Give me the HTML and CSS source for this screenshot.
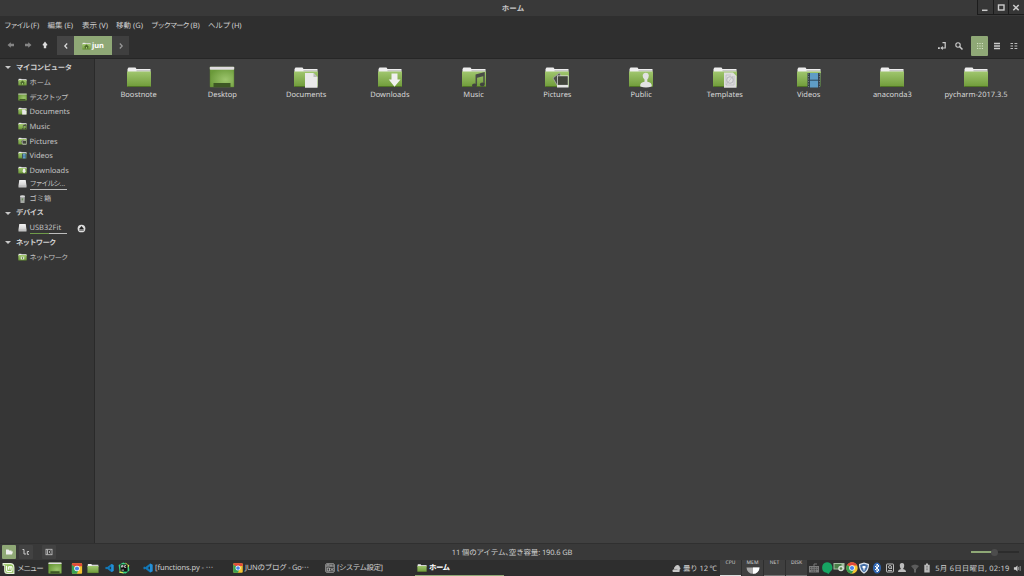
FILE: index.html
```html
<!DOCTYPE html>
<html lang="ja">
<head>
    <meta charset="UTF-8">
    <title>ホーム</title>
    <link rel="stylesheet" href="styles.css">
</head>
<body>

<svg class="defs" width="0" height="0">
    <defs>
        <linearGradient id="green" x1="0" y1="0" x2="0" y2="1">
            <stop offset="0" stop-color="#a0c66e"/>
            <stop offset="1" stop-color="#6f9b39"/>
        </linearGradient>
        <radialGradient id="glow" cx="0.65" cy="0.6" r="0.7">
            <stop offset="0" stop-color="#9dc56d"/>
            <stop offset="1" stop-color="#6b9a3a"/>
        </radialGradient>
        <linearGradient id="silver" x1="0" y1="0" x2="0" y2="1">
            <stop offset="0" stop-color="#f4f4f4"/>
            <stop offset="1" stop-color="#c4c4c4"/>
        </linearGradient>
        <symbol id="folder" viewBox="0 0 26 22">
            <path d="M1.5 3 L2.5 1.5 H9.5 L10.5 3 H24.5 V8 H1.5Z" fill="#eee"/>
            <path d="M10.5 4 H24 V5.5 H10.5Z" fill="#c9c9c9"/>
            <path d="M1 5.5 H25 V19.5 Q25 21 24 21 H2 Q1 21 1 19.5Z" fill="url(#green)"/>
            <path d="M1.5 20.5 H24.5" stroke="#4f7326" stroke-width="1"/>
        </symbol>
        <symbol id="desktop" viewBox="0 0 26 22">
            <rect x="0.8" y="0.8" width="24.4" height="20.5" rx="0.7" fill="#5d8432"/>
            <rect x="1.3" y="3" width="23.4" height="17.8" fill="url(#glow)"/>
            <rect x="0.8" y="0.8" width="24.4" height="3" rx="0.7" fill="#e0dce0"/>
            <rect x="4.5" y="17" width="17" height="4" fill="#3d5724"/>
        </symbol>
        <symbol id="doc" viewBox="0 0 26 22">
            <path d="M12 7 H20.5 L24.5 11 V21.7 H12Z" fill="#e9e9e9"/>
            <path d="M20.5 7 V11 H24.5Z" fill="#bcbcbc"/>
        </symbol>
        <symbol id="down" viewBox="0 0 26 22">
            <path d="M14.5 7.5 H20.5 V13.5 H23.5 L17.5 20.8 L11.8 13.5 H14.5Z" fill="#f0f0f0"/>
        </symbol>
        <symbol id="note" viewBox="0 0 26 22">
            <path d="M15.3 19 V9 L23 7 V18" fill="none" stroke="#4a4c48" stroke-width="1.5"/>
            <path d="M15.3 9 L23 7 V10 L15.3 12Z" fill="#4a4c48"/>
            <ellipse cx="13.5" cy="19.5" rx="2.5" ry="2" fill="#41433f"/>
            <ellipse cx="21.3" cy="18.5" rx="2.4" ry="2" fill="#41433f"/>
        </symbol>
        <symbol id="photo" viewBox="0 0 26 22">
            <path d="M9 12 L15.5 7 L20 17 L13 19Z" fill="#4b4d46" stroke="#a8a8a8" stroke-width="0.8"/>
            <rect x="13" y="9.5" width="11.5" height="12" fill="#e5e5e5"/>
            <rect x="13.7" y="10.2" width="10.1" height="8.7" fill="#41443b"/>
        </symbol>
        <symbol id="person" viewBox="0 0 26 22">
            <path d="M12.3 20.5 Q11.5 16.5 16.5 15.8 V13.5 Q14.3 11 14.8 8.8 Q15.5 6.7 17.8 6.7 Q20.3 6.7 20.8 9 Q21 11.5 19.3 13.5 V15.8 Q24.3 16.5 23.7 20.5 Q18 22.5 12.3 20.5Z" fill="#e2e2e2"/>
        </symbol>
        <symbol id="template" viewBox="0 0 26 22">
            <path d="M12 6.5 H21 L24.5 10 V21.7 H12Z" fill="#dedede"/>
            <circle cx="18" cy="14" r="3.3" fill="none" stroke="#b4b4ba" stroke-width="1"/>
            <path d="M14 19 L21 10 M14 19 H22 V10 M14 9 V19 M14 9 H19" fill="none" stroke="#bdbdc2" stroke-width="0.8"/>
        </symbol>
        <symbol id="film" viewBox="0 0 26 22">
            <rect x="11.5" y="7" width="13" height="14.5" fill="#34414c"/>
            <rect x="14" y="7" width="8" height="14.5" fill="#5f9cc6"/>
            <path d="M14 14.2 H22" stroke="#263d50" stroke-width="0.9"/>
            <path d="M12.6 7.5 V21.5 M23.4 7.5 V21.5" stroke="#8b9298" stroke-width="0.8" stroke-dasharray="1.1 1.4"/>
        </symbol>
        <symbol id="house" viewBox="0 0 26 22">
            <path d="M13 7 L20 13 H18 V18 H8 V13 H6Z" fill="#4d6b2c"/>
            <path d="M11.5 18 V14 H14.5 V18Z" fill="#a5c77b"/>
        </symbol>
        <symbol id="drive" viewBox="0 0 22 20">
            <path d="M3 0 H19 L21 14 V18 Q21 19 20 19 H2 Q1 19 1 18 V14Z" fill="url(#silver)"/>
            <path d="M1.5 15 H20.5" stroke="#9a9a9a"/>
        </symbol>
        <symbol id="trash" viewBox="0 0 20 20">
            <path d="M4 3 H16 L15 20 H5Z" fill="#a4a8a4"/>
            <ellipse cx="10" cy="3" rx="6.5" ry="2.5" fill="#d8d8d8"/>
            <path d="M8 9 L12 8 L11 14 L8 13Z" fill="#6d8c5a"/>
        </symbol>
        <symbol id="chrome" viewBox="0 0 20 20">
            <circle cx="10" cy="10" r="9.5" fill="#f8c631"/>
            <path d="M10 10 L1.8 5.2 A9.5 9.5 0 0 1 18.8 6 H10Z" fill="#e0483a"/>
            <path d="M10 10 L1.8 5.2 A9.5 9.5 0 0 0 9.5 19.5 L13.5 12Z" fill="#38a052"/>
            <circle cx="10" cy="10" r="4.6" fill="#fff"/>
            <circle cx="10" cy="10" r="3.5" fill="#4b84e8"/>
        </symbol>
        <symbol id="chrome-tile" viewBox="0 0 20 20">
            <rect x="0.5" y="0.5" width="19" height="19" rx="2" fill="#f3c432"/>
            <path d="M10 10 L0.5 3 V2 Q0.5 0.5 2 0.5 H18 Q19.5 0.5 19.5 2 V6 H10Z" fill="#df4a3b"/>
            <path d="M10 10 L0.5 3 V18 Q0.5 19.5 2 19.5 H9.5 L13.5 12Z" fill="#38a052"/>
            <circle cx="10" cy="10" r="5" fill="#fff"/>
            <circle cx="10" cy="10" r="3.7" fill="#4b84e8"/>
        </symbol>
        <symbol id="vscode" viewBox="0 0 20 20">
            <path d="M14 1 L19 3.5 V16.5 L14 19 L4.5 11.5 L2.5 13 L1 12 V8 L2.5 7 L4.5 8.5Z" fill="#1278b8"/>
            <path d="M14 6.5 L9.5 10 L14 13.5Z" fill="#24333d"/>
            <path d="M14 1 L19 3.5 V16.5 L14 19Z" fill="#2590d8"/>
        </symbol>
        <symbol id="mint" viewBox="0 0 24 24">
            <path d="M1 2 H15 Q23 2 23 10 V22 H10 Q4 22 4 16 V7 H1Z" fill="#e6f1da"/>
            <path d="M3 4 H15 Q21 4 21 10 V20 H10 Q6 20 6 16 V5.5 H3Z" fill="#92c15c"/>
            <path d="M8.5 7 V15 Q8.5 17.5 11 17.5 H16 Q18.5 17.5 18.5 15 V10.5 Q18.5 8.5 16.5 8.5 Q15 8.5 15 10.5 V14.5 M15 10.5 Q15 8.5 13.3 8.5 Q11.8 8.5 11.8 10.5 V14.5" fill="none" stroke="#fff" stroke-width="2"/>
        </symbol>
    </defs>
</svg>

<div class="window">
    <header class="titlebar">
        <span class="title">ホーム</span>
        <div class="controls">
            <span><svg viewBox="0 0 14 14"><path d="M4 10.3 H9.5" stroke="#ccc" stroke-width="1.5"/></svg></span>
            <span><svg viewBox="0 0 14 14"><rect x="4.5" y="5" width="5.5" height="5" fill="none" stroke="#ccc" stroke-width="1.4"/></svg></span>
            <span><svg viewBox="0 0 14 14"><path d="M4.3 5 L9.7 10.3 M9.7 5 L4.3 10.3" stroke="#ccc" stroke-width="1.5"/></svg></span>
        </div>
    </header>

    <nav class="menubar">
        <span class="m1"><b>ファイル</b> (F)</span>
        <span class="m2">編集 (E)</span>
        <span class="m3">表示 (V)</span>
        <span class="m4">移動 (G)</span>
        <span class="m5"><b>ブックマーク</b> (B)</span>
        <span class="m6">ヘルプ (H)</span>
    </nav>

    <div class="toolbar">
        <div class="nav-icons">
            <svg viewBox="0 0 10 10"><path d="M1.5 5 L4.8 2.2 V3.8 H8 V6.2 H4.8 V7.8Z" fill="#858585"/></svg>
            <svg viewBox="0 0 10 10"><path d="M8.5 5 L5.2 2.2 V3.8 H2 V6.2 H5.2 V7.8Z" fill="#858585"/></svg>
            <svg viewBox="0 0 10 10"><path d="M5 1.5 L7.6 5 L6.2 5.8 V8.3 H3.8 V5.8 L2.4 5Z" fill="#ddd"/></svg>
        </div>
        <div class="pathbar">
            <span class="step"><svg viewBox="0 0 10 10"><path d="M6.2 2.5 L3.8 5 L6.2 7.5" fill="none" stroke="#ddd" stroke-width="1.2"/></svg></span>
            <span class="crumb"><svg viewBox="0 0 26 22"><use href="#folder"/><use href="#house"/></svg>jun</span>
            <span class="step"><svg viewBox="0 0 10 10"><path d="M3.8 2.5 L6.2 5 L3.8 7.5" fill="none" stroke="#999" stroke-width="1.2"/></svg></span>
        </div>
        <div class="tools">
            <svg class="tool" viewBox="0 0 10 10"><path d="M5.5 1.7 H8.2 V7 H5" fill="none" stroke="#ccc" stroke-width="1.2"/><path d="M5.8 5 V8.9 L3.3 7Z M1 6.3 H2.8 V8 H1Z" fill="#ccc"/></svg>
            <svg class="tool" viewBox="0 0 10 10"><circle cx="4" cy="4" r="2.2" fill="none" stroke="#ccc" stroke-width="1.1"/><path d="M5.5 5.5 L8.5 8.5" stroke="#ccc" stroke-width="1.5"/></svg>
            <span class="view active"><svg viewBox="0 0 10 10"><path d="M2 2.5 H8 M2 5 H8 M2 7.5 H8" stroke="#d5e2c6" stroke-width="1.2" stroke-dasharray="1.2 1.2"/></svg></span>
            <span class="view"><svg viewBox="0 0 10 10"><path d="M2 2.5 H8 M2 5 H8 M2 7.5 H8" stroke="#ccc" stroke-width="1.3"/></svg></span>
            <span class="view"><svg viewBox="0 0 10 10"><path d="M1.5 2.5 H4 M1.5 5 H4 M1.5 7.5 H4 M5.5 2.5 H8.3 M5.5 5 H8.3 M5.5 7.5 H8.3" stroke="#bbb" stroke-width="1.2"/></svg></span>
        </div>
    </div>

    <main class="body">
        <aside class="sidebar">
            <div class="group g1"><i></i><span>マイコンピュータ</span></div>
            <div class="place"><svg viewBox="0 0 26 22"><use href="#folder"/><use href="#house"/></svg><span class="kana">ホーム</span></div>
            <div class="place"><svg viewBox="0 0 26 22"><use href="#desktop"/></svg><span class="kana k-desk">デスクトップ</span></div>
            <div class="place"><svg viewBox="0 0 26 22"><use href="#folder"/><use href="#doc"/></svg><span>Documents</span></div>
            <div class="place"><svg viewBox="0 0 26 22"><use href="#folder"/><use href="#note"/></svg><span>Music</span></div>
            <div class="place"><svg viewBox="0 0 26 22"><use href="#folder"/><use href="#photo"/></svg><span>Pictures</span></div>
            <div class="place"><svg viewBox="0 0 26 22"><use href="#folder"/><use href="#film"/></svg><span>Videos</span></div>
            <div class="place"><svg viewBox="0 0 26 22"><use href="#folder"/><use href="#down"/></svg><span>Downloads</span></div>
            <div class="place"><svg viewBox="0 0 22 20"><use href="#drive"/></svg><span class="kana disk fs"><b>ファイルシ</b>...</span></div>
            <div class="place bin"><svg viewBox="0 0 20 20"><use href="#trash"/></svg><span class="kana">ゴミ箱</span></div>
            <div class="group g2"><i></i><span>デバイス</span></div>
            <div class="place"><svg viewBox="0 0 22 20"><use href="#drive"/></svg><span class="disk usb">USB32Fit</span>
                <svg class="eject" viewBox="0 0 10 10"><circle cx="5" cy="5" r="4.3" fill="#ddd"/><path d="M5 2.3 L7.7 5.5 H2.3Z M2.5 6.2 H7.5 V7.3 H2.5Z" fill="#222"/></svg>
            </div>
            <div class="group g3"><i></i><span>ネットワーク</span></div>
            <div class="place"><svg viewBox="0 0 26 22"><use href="#folder"/><path d="M8 10 H18 V18 H8Z" fill="#dfe8d6"/><path d="M11 13 H15 M13 13 V17" stroke="#4d6b2c" stroke-width="2"/></svg><span class="kana k-net">ネットワーク</span></div>
        </aside>

        <section class="files">
            <div class="file"><svg viewBox="0 0 26 22"><use href="#folder"/></svg><span>Boostnote</span></div>
            <div class="file"><svg viewBox="0 0 26 22"><use href="#desktop"/></svg><span>Desktop</span></div>
            <div class="file"><svg viewBox="0 0 26 22"><use href="#folder"/><use href="#doc"/></svg><span>Documents</span></div>
            <div class="file"><svg viewBox="0 0 26 22"><use href="#folder"/><use href="#down"/></svg><span>Downloads</span></div>
            <div class="file"><svg viewBox="0 0 26 22"><use href="#folder"/><use href="#note"/></svg><span>Music</span></div>
            <div class="file"><svg viewBox="0 0 26 22"><use href="#folder"/><use href="#photo"/></svg><span>Pictures</span></div>
            <div class="file"><svg viewBox="0 0 26 22"><use href="#folder"/><use href="#person"/></svg><span>Public</span></div>
            <div class="file"><svg viewBox="0 0 26 22"><use href="#folder"/><use href="#template"/></svg><span>Templates</span></div>
            <div class="file"><svg viewBox="0 0 26 22"><use href="#folder"/><use href="#film"/></svg><span>Videos</span></div>
            <div class="file"><svg viewBox="0 0 26 22"><use href="#folder"/></svg><span>anaconda3</span></div>
            <div class="file"><svg viewBox="0 0 26 22"><use href="#folder"/></svg><span>pycharm-2017.3.5</span></div>
        </section>
    </main>

    <footer class="statusbar">
        <div class="side-buttons">
            <span class="sb active"><svg viewBox="0 0 10 10"><path d="M2 2.5 H4.5 L5.2 3.5 H7.5 V4.5 H9 L8 7.5 H2Z" fill="#eee"/></svg></span>
            <span class="sb"><svg viewBox="0 0 10 10"><path d="M1.5 2.5 H3 V7 H5 M8 4.5 H6.3 V7.3 H8" fill="none" stroke="#ccc" stroke-width="1"/></svg></span>
            <span class="sb last"><svg viewBox="0 0 10 10"><rect x="2" y="2.3" width="6" height="5.4" fill="none" stroke="#bbb" stroke-width="0.9"/><path d="M3.5 2.5 V7.5 M6.5 3.7 L5 5 L6.5 6.3" fill="none" stroke="#bbb" stroke-width="0.9"/></svg></span>
        </div>
        <span class="status">11 個のアイテム<b>、</b>空き容量: 190.6 GB</span>
        <div class="zoom"><i></i></div>
    </footer>
</div>

<div class="panel">
    <div class="launchers">
        <svg class="mint" viewBox="0 0 24 24"><use href="#mint"/></svg>
        <span class="menu">メニュー</span>
        <svg class="l-desk" viewBox="0 0 26 22"><use href="#desktop"/></svg>
        <svg class="l-chrome" viewBox="0 0 20 20"><use href="#chrome-tile"/></svg>
        <svg class="l-folder" viewBox="0 0 26 22"><use href="#folder"/></svg>
        <svg class="l-code" viewBox="0 0 20 20"><use href="#vscode"/></svg>
        <svg class="l-charm" viewBox="0 0 20 20"><path d="M1 5 L9 1 L18 6 L19 14 L13 19 L3 18Z" fill="#38d585"/><path d="M12 1 L19 6 L16 10Z M4 13 L10 19 L2 18Z" fill="#d9e956"/><rect x="4" y="4" width="12" height="12" fill="#111"/><path d="M6 9 V6 H8.5 V8 H6 M13.5 6 H11 V9 H13.5 M6 13.5 H10" fill="none" stroke="#fff" stroke-width="1.2"/></svg>
    </div>
    <div class="tasks">
        <div class="task t1"><svg viewBox="0 0 20 20"><use href="#vscode"/></svg><span>[functions.py - ⋯</span></div>
        <div class="task t2"><svg viewBox="0 0 20 20"><use href="#chrome-tile"/></svg><span>JUNのブログ - Go⋯</span></div>
        <div class="task t3"><svg viewBox="0 0 20 20"><rect x="1.5" y="1.5" width="17" height="17" rx="2" fill="#3d3d3d" stroke="#c0c0c0" stroke-width="1.5"/><path d="M2 6 H18 M4 3.7 H9 M12 3 V7 M4.5 10 H9 V16 H4.5Z M11 10 L17 16 M17 10 L11 16" fill="none" stroke="#c0c0c0" stroke-width="1.5"/></svg><span>[システム設定]</span></div>
        <div class="task t4 current"><svg viewBox="0 0 26 22"><use href="#folder"/></svg><span>ホーム</span></div>
    </div>
    <div class="tray">
        <svg class="cloud" viewBox="0 0 10 10"><path d="M3.2 3 Q4 0.8 6.5 1 Q9 1.5 8.5 3.7 Q10.3 5 8.7 6.3 H8 Q9.3 7.3 8 9 H1.2 Q-0.3 7.5 1.2 6 H3 Q1.3 4.7 3.2 3Z" fill="#c8c8c8"/><path d="M3 6 H6" stroke="#666" stroke-width="0.6"/></svg>
        <span class="weather">曇り 12 ℃</span>
        <div class="meters">
            <div class="meter cpu">CPU</div>
            <div class="meter mem">MEM<svg viewBox="0 0 14 7"><path d="M0.5 0.5 H13.5 A6.5 6.3 0 0 1 0.5 0.5Z" fill="#aaa"/><path d="M7 0.5 H13.5 A6.5 6.3 0 0 1 7 6.8Z" fill="#fff"/></svg></div>
            <div class="meter">NET</div>
            <div class="meter">DISK</div>
        </div>
        <div class="tray-icons">
            <svg viewBox="0 0 12 12"><path d="M6 4 V2 H9" fill="none" stroke="#777"/><rect x="1" y="4" width="10" height="6.5" fill="#7c7c7c"/><path d="M2 5.7 H10 M2 7.4 H10 M3.5 9.1 H8.5" stroke="#333" stroke-width="0.8" stroke-dasharray="1 0.7"/></svg>
            <svg viewBox="0 0 12 12"><path d="M6 0.3 A5.3 5.3 0 0 1 9 10 L7.5 12 L5.5 10.8 A5.3 5.3 0 0 1 6 0.3Z" fill="#16a562"/></svg>
            <svg viewBox="0 0 12 12"><rect x="0.5" y="1" width="11" height="6.5" fill="#a4c0a2"/><rect x="1.5" y="2" width="7" height="4.5" fill="#4a7e48"/><circle cx="8" cy="6.5" r="2.8" fill="#d7dfd5"/><circle cx="8" cy="6.5" r="1.3" fill="#58834d"/></svg>
            <svg viewBox="0 0 20 20"><use href="#chrome"/></svg>
            <svg viewBox="0 0 12 12"><path d="M6 0.5 L11 2 Q11.3 9 6 11.7 Q0.7 9 1 2Z" fill="#dfe6ef"/><path d="M6 1.8 L9.8 3 Q9.8 8 6 10.3 Q2.2 8 2.2 3Z" fill="#456fa6"/><path d="M4.5 4 H7.5 V6 L6.5 6.5 V8.5 H5.5 V6.5 L4.5 6Z" fill="#fff"/></svg>
            <svg viewBox="0 0 12 12"><ellipse cx="6" cy="6" rx="4" ry="5.5" fill="#2f66b3"/><path d="M4 4 L8 8 L6 10 V2 L8 4 L4 8" fill="none" stroke="#fff" stroke-width="1"/></svg>
            <svg viewBox="0 0 12 12"><rect x="2.5" y="2" width="7" height="8" rx="0.5" fill="none" stroke="#bbb"/><circle cx="6" cy="5" r="1.5" fill="none" stroke="#bbb"/><path d="M4 8.5 H8 M7 6 L8 7" stroke="#bbb"/></svg>
            <svg viewBox="0 0 12 12"><path d="M6 1 Q8.5 1 8.2 4 Q8 6 7 7 Q10 7.5 10 10 H2 Q2 7.5 5 7 Q4 6 3.8 4 Q3.5 1 6 1Z" fill="#bdbdbd"/></svg>
            <svg viewBox="0 0 12 12"><path d="M2 4 Q6 1 10 4 L7 7.5 H5Z" fill="#5c5c5c"/><path d="M6 7 V10.5" stroke="#777" stroke-width="1.5"/></svg>
            <svg viewBox="0 0 12 12"><path d="M5 1.5 H7 V2.7 H8.7 V10.5 H3.3 V2.7 H5Z" fill="#bbb"/><path d="M5 4.3 H7 M5 6 H7 M5 7.7 H7" stroke="#777" stroke-width="0.8"/></svg>
        </div>
        <span class="clock">5月 6日日曜日, 02:19</span>
        <svg class="sound" viewBox="0 0 10 10"><path d="M1 3.7 H2.8 L5 1.7 V8.3 L2.8 6.3 H1Z" fill="#ccc"/><path d="M6.3 3.3 V6.7 M8 2.3 V7.7" stroke="#aaa" stroke-width="0.9"/></svg>
    </div>
</div>

</body>
</html>
```
FILE: styles.css
```css
* {
    box-sizing: border-box;
}
body {
    margin: 0;
    width: 1024px;
    height: 576px;
    overflow: hidden;
    display: flex;
    flex-direction: column;
    background: #2f2f2f;
    color: #cfcfcf;
    font-family: "Noto Sans", "Noto Sans CJK JP", sans-serif;
    font-size: 7.5px;
    line-height: 10px;
    white-space: nowrap;
    text-rendering: geometricPrecision;
}
svg {
    display: block;
    flex: none;
}
.defs {
    position: absolute;
}
.window {
    height: 560px;
    display: flex;
    flex-direction: column;
}

/* title and menus */
.titlebar {
    height: 16px;
    display: grid;
    grid-template-columns: 1fr auto 1fr;
    align-items: center;
    background: #393939;
}
.title {
    grid-column: 2;
    padding: 2px 0 0 2px;
    color: #c4c4c4;
    font-weight: bold;
}
.controls {
    justify-self: end;
    align-self: start;
    display: flex;
    gap: 1px;
    padding: 0 0 1px 1px;
    background: #1c1c1c;
}
.controls span {
    width: 14.7px;
    height: 14px;
    background: #363636;
}
.controls svg {
    width: 14px;
    height: 14px;
}
.menubar {
    height: 17px;
    padding: 2px 0 0 4px;
    display: flex;
    align-items: center;
}
.menubar b, .status b, .fs b {
    font-weight: normal;
}
.m1 { width: 43.5px; }
.m2 { width: 34.5px; }
.m3 { width: 34px; }
.m4 { width: 35px; }
.m5 { width: 57px; }
.m1 b { letter-spacing: -1.3px; }
.m5 b { letter-spacing: -1.25px; }
.m6 { letter-spacing: -0.15px; }

/* toolbar */
.toolbar {
    height: 26px;
    padding: 3px 2px 0 6px;
    display: flex;
    align-items: flex-start;
    border-bottom: 1px solid #262626;
}
.nav-icons {
    display: flex;
    gap: 7px;
    padding-top: 4px;
    width: 51px;
}
.nav-icons svg, .step svg, .tool, .view svg, .sb svg {
    width: 10px;
    height: 10px;
}
.pathbar {
    display: flex;
}
.step, .crumb {
    height: 19px;
    display: flex;
    align-items: center;
    justify-content: center;
}
.step {
    width: 17px;
    background: #454545;
}
.step:last-child {
    background: #3f3f3f;
}
.crumb {
    width: 38px;
    background: #8fa876;
    color: #fff;
    font-weight: bold;
    gap: 1px;
}
.crumb svg {
    width: 9px;
    height: 8px;
}
.tools {
    margin-left: auto;
    display: flex;
    align-items: center;
}
.tool {
    margin-right: 7px;
}
.view {
    width: 17px;
    height: 20px;
    display: flex;
    align-items: center;
    justify-content: center;
}
.active {
    background: #8fa876;
    border-radius: 1px;
}

/* sidebar */
.body {
    height: 484px;
    display: flex;
}
.sidebar {
    width: 95px;
    padding-top: 1px;
    background: #363636;
    border-right: 1px solid #2a2a2a;
}
.group, .place {
    height: 14.55px;
    display: flex;
    align-items: center;
}
.group {
    padding-left: 5px;
    font-weight: bold;
    font-size: 7.3px;
}
.group i {
    border: 3px solid transparent;
    border-top: 3.5px solid #c8c8c8;
    border-bottom: 0;
    margin: 1px 5px 0 0;
}
.group span {
    padding-top: 1.5px;
}
.g1 span { letter-spacing: -0.35px; }
.g2 span { letter-spacing: -0.4px; }
.g3 span { letter-spacing: -0.7px; }
.place {
    padding: 1px 0 0 18px;
    color: #c2c2c2;
}
.place span {
    padding-top: 2px;
}
.place svg {
    width: 9px;
    height: 8px;
    margin-right: 2.5px;
}
.kana {
    font-size: 7.2px;
}
.k-desk, .k-net {
    letter-spacing: -0.9px;
}
.place .disk {
    width: 37.5px;
    height: 12px;
    padding-top: 1px;
    border-bottom: 1px solid #bdbdbd;
}
.fs b {
    letter-spacing: -1.2px;
}
.bin span {
    padding-top: 0;
}
.usb {
    border-image: linear-gradient(to right, #6f9b49 52%, #bdbdbd 52%) 1;
}
.place .eject {
    width: 9px;
    height: 9px;
    margin: 1px 0 0 9.5px;
}

/* file grid */
.files {
    flex: 1;
    padding: 7px 6px 0 2px;
    display: grid;
    grid-template-columns: repeat(11, 83.75px);
    align-content: start;
    background: #404040;
}
.file {
    display: flex;
    flex-direction: column;
    align-items: center;
    gap: 2px;
    color: #d8d8d8;
}
.file svg {
    width: 26px;
    height: 22px;
}

/* status bar */
.statusbar {
    height: 17px;
    display: grid;
    grid-template-columns: 1fr auto 1fr;
    align-items: center;
    background: #393939;
    border-top: 1px solid #303030;
}
.side-buttons {
    display: flex;
    gap: 3px;
    padding-left: 2px;
}
.sb {
    width: 14px;
    height: 14px;
    display: flex;
    align-items: center;
    justify-content: center;
    background: #424242;
    border-radius: 1px;
}
.sb.active {
    background: #8fa876;
}
.last {
    margin-left: 6px;
}
.status {
    padding-top: 2px;
    letter-spacing: -0.14px;
}
.status b {
    letter-spacing: -4px;
}
.zoom {
    justify-self: end;
    width: 48px;
    height: 2px;
    margin-right: 5px;
    display: flex;
    align-items: center;
    background: linear-gradient(to right, #8fa876 22px, #2c2c2c 22px);
}
.zoom i {
    width: 7px;
    height: 7px;
    margin-left: 20px;
    border-radius: 50%;
    background: #4c4c4c;
}

/* bottom panel */
.panel {
    height: 16px;
    display: flex;
    background: #2e2e2e;
}
.launchers, .tasks, .task, .tray, .tray-icons {
    display: flex;
    align-items: center;
}
.launchers {
    width: 143px;
    padding-left: 2px;
}
.mint {
    width: 13px;
    height: 13px;
}
.menu {
    width: 33px;
    padding: 1px 0 0 2px;
    letter-spacing: -1.1px;
}
.l-desk {
    width: 14px;
    height: 12px;
    margin-right: 9px;
}
.l-chrome {
    width: 12px;
    height: 11px;
    margin-right: 4px;
}
.l-folder {
    width: 12px;
    height: 11px;
    margin-right: 6px;
}
.l-code {
    width: 9px;
    height: 10px;
    margin-right: 4px;
}
.l-charm {
    width: 12px;
    height: 12px;
}
.tasks {
    align-self: stretch;
}
.task {
    height: 16px;
    gap: 2px;
}
.task svg {
    width: 10px;
    height: 10px;
}
.t1 { width: 90px; }
.t2 { width: 92px; }
.t3 { width: 90px; }
.t4 { width: 89px; padding: 1px 0 0 2px; }
.t1 span { letter-spacing: -0.07px; }
.t2 span { letter-spacing: -0.25px; }
.t3 span { letter-spacing: -0.55px; }
.t4 span { letter-spacing: -0.6px; }
.current {
    color: #fff;
    font-weight: bold;
    border-bottom: 1px solid #8fa876;
}
.tray {
    flex: 1;
    padding-left: 168px;
}
.cloud {
    width: 9px;
    height: 9px;
}
.weather {
    width: 39px;
    padding: 1px 0 0 2px;
    letter-spacing: -0.15px;
}
.meters {
    align-self: stretch;
    display: flex;
    gap: 1px;
}
.meter {
    width: 21px;
    border-bottom: 1px solid #777;
    background: #3f3f3f;
    font-size: 5px;
    line-height: 6px;
    text-align: center;
}
.cpu {
    border-bottom-color: #ddd;
}
.mem {
    border-bottom: 0;
}
.mem svg {
    width: 14px;
    height: 7px;
    margin: 1px auto 0;
}
.tray-icons {
    gap: 0.6px;
    padding-left: 1px;
}
.tray-icons svg {
    width: 12px;
    height: 12px;
}
.clock {
    margin-left: 2px;
    padding-top: 1px;
    letter-spacing: 0.2px;
}
.sound {
    width: 9px;
    height: 9px;
    margin: 0 2px 0 auto;
}
```
